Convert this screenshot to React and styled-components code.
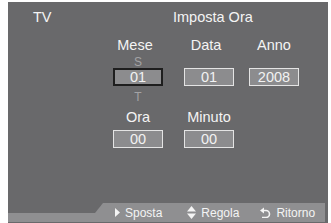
import React from "react";
import styled, { createGlobalStyle } from "styled-components";

const Global = createGlobalStyle`
  html, body { margin: 0; padding: 0; background: #ffffff; }
  body { font-family: "Liberation Sans", Arial, sans-serif; }
`;

const Screen = styled.div`
  margin: 2px 3px 0 8px;
  height: 221px;
  background: #69696b;
  display: flex;
  flex-direction: column;
  color: #f4f4f4;
  overflow: hidden;
`;

const Header = styled.div`
  display: grid;
  grid-template-columns: 140px auto;
  padding: 7px 0 0 25px;
  font-size: 14.5px;
  line-height: 17px;
`;

const Form = styled.div`
  display: flex;
  flex-direction: column;
  margin-top: 12px;
  padding-left: 105px;
`;

const Row = styled.div`
  display: grid;
  grid-template-columns: 71px 65px 50px;
  margin-top: ${(p) => p.$top || 0}px;
`;

const Cell = styled.div`
  width: 50px;
  display: flex;
  justify-content: center;
  white-space: nowrap;
`;

const Label = styled(Cell)`
  height: 15px;
  line-height: 15px;
  font-size: 14.5px;
  margin-left: ${(p) => p.$shift || 0}px;
`;

const Hint = styled(Cell)`
  height: 12px;
  line-height: 12px;
  font-size: 12px;
  color: #a3a3a5;
`;

const Field = styled.div`
  box-sizing: border-box;
  width: 50px;
  height: 18px;
  background: #8c8c8e;
  border: ${(p) => (p.$active ? "2px solid #1e1e1e" : "1px solid #e4e4e4")};
  display: flex;
  align-items: center;
  justify-content: center;
  font-size: 14.5px;
  color: #f2f2f2;
`;

const Footer = styled.div`
  margin-top: auto;
  margin-bottom: 1px;
  margin-right: 3px;
  display: flex;
  align-items: flex-end;
  height: 20px;
`;

const Base = styled.div`
  width: 87px;
  height: 9px;
  background: #8f8f91;
  flex: none;
`;

const Tab = styled.div`
  flex: 1;
  height: 19px;
  background: #8f8f91;
  clip-path: polygon(0 10px, 8px 0, 100% 0, 100% 100%, 0 100%);
  display: flex;
  align-items: center;
  padding-left: 20px;
  font-size: 12px;
  color: #f4f4f4;
`;

const Action = styled.div`
  display: flex;
  align-items: center;
  gap: ${(p) => p.$gap}px;
  margin-right: ${(p) => p.$after || 0}px;
  white-space: nowrap;
`;

const Icon = styled.svg`
  display: block;
  flex: none;
`;

export default function App() {
  return (
    <>
      <Global />
      <Screen>
        <Header>
          <span>TV</span>
          <span>Imposta Ora</span>
        </Header>
        <Form>
          <Row>
            <Label $shift={-3}>Mese</Label>
            <Label $shift={-3}>Data</Label>
            <Label>Anno</Label>
          </Row>
          <Row $top={3}>
            <Hint>S</Hint>
          </Row>
          <Row>
            <Field $active>01</Field>
            <Field>01</Field>
            <Field>2008</Field>
          </Row>
          <Row $top={5}>
            <Hint>T</Hint>
          </Row>
          <Row $top={7}>
            <Label>Ora</Label>
            <Label>Minuto</Label>
          </Row>
          <Row $top={5}>
            <Field>00</Field>
            <Field>00</Field>
          </Row>
        </Form>
        <Footer>
          <Base />
          <Tab>
            <Action $gap={5} $after={25}>
              <Icon width="5" height="9" viewBox="0 0 5 9">
                <polygon points="0,0 5,4.5 0,9" fill="#f4f4f4" />
              </Icon>
              <span>Sposta</span>
            </Action>
            <Action $gap={5} $after={21}>
              <Icon width="9" height="13" viewBox="0 0 9 13">
                <polygon points="4.5,0 9,5.5 0,5.5" fill="#f4f4f4" />
                <polygon points="0,7.5 9,7.5 4.5,13" fill="#f4f4f4" />
              </Icon>
              <span>Regola</span>
            </Action>
            <Action $gap={5}>
              <Icon width="11" height="11" viewBox="0 0 11 11">
                <path
                  d="M3 3.5 H6 A3.5 3.5 0 0 1 6 10.5 H2"
                  fill="none"
                  stroke="#f4f4f4"
                  strokeWidth="1.6"
                />
                <polygon points="0,3.5 4,0.5 4,6.5" fill="#f4f4f4" />
              </Icon>
              <span>Ritorno</span>
            </Action>
          </Tab>
        </Footer>
      </Screen>
    </>
  );
}
